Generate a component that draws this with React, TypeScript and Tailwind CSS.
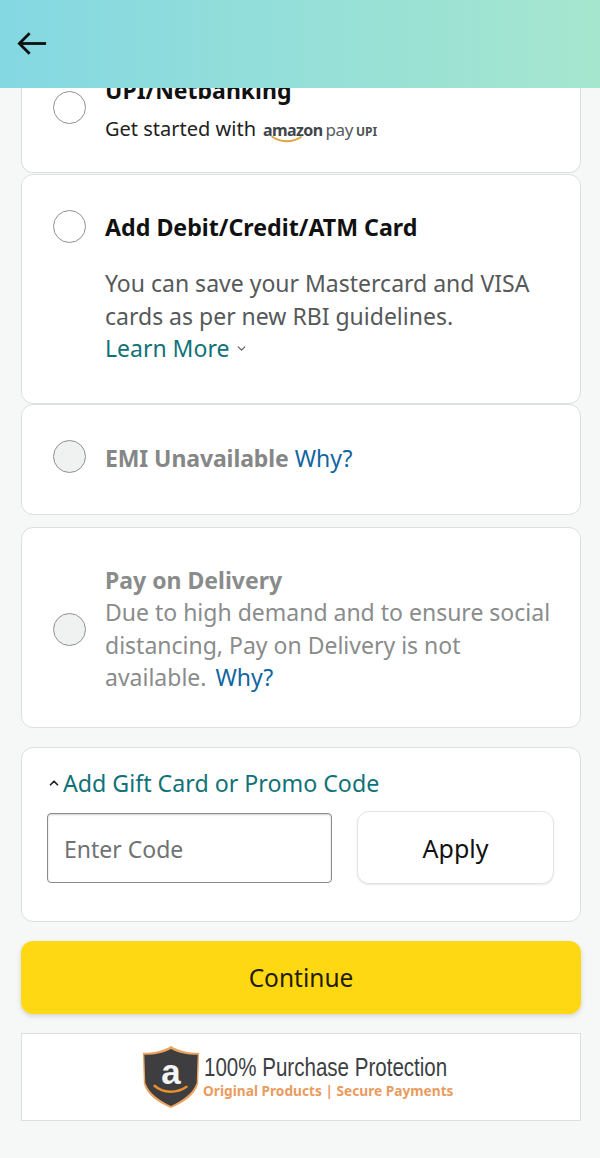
import { ChevronDown, ChevronUp } from "lucide-react";

const font = { fontFamily: '"Noto Sans", "Open Sans", sans-serif' };

function Radio({ disabled }: { disabled?: boolean }) {
  return (
    <span
      className={`block h-[33px] w-[33px] shrink-0 rounded-full border-[1.5px] border-[#8f9191] ${
        disabled ? "bg-[#f0f1f1]" : "bg-white"
      }`}
    />
  );
}

function AmazonPayLogo() {
  return (
    <span className="relative ml-[7px] inline-flex items-baseline leading-none">
      <span className="text-[16px] font-bold tracking-[-0.6px] text-[#3f4649]">amazon</span>
      <span className="ml-[3px] text-[17px] tracking-[-0.4px] text-[#555c5f]">pay</span>
      <span className="ml-[3px] text-[12px] font-bold text-[#4b5255]">UPI</span>
      <svg className="absolute left-[8px] top-[14px]" width="32" height="9" viewBox="0 0 32 9" fill="none">
        <path d="M1 1.5C9 7.5 21 8 30 2" stroke="#e2a33f" strokeWidth="1.8" strokeLinecap="round" />
      </svg>
    </span>
  );
}

function ShieldLogo() {
  return (
    <svg width="60" height="64" viewBox="0 0 60 66" className="shrink-0">
      <path d="M1 8 C12 8 22 6 30 1 C38 6 48 8 59 8 L58 40 C55 52 42 60 30 65 C18 60 5 52 2 40 Z" fill="#e9a35f" />
      <path d="M2.5 10 C14 10 23 8 30 4 C37 8 46 10 57.5 10 L56.5 39 C53 50 41 58 30 63 C19 58 7 50 3.5 39 Z" fill="#3e3e40" />
      <text x="30" y="40" textAnchor="middle" fontFamily="Liberation Sans, sans-serif" fontWeight="700" fontSize="36" fill="#f4f4f4">
        a
      </text>
      <path d="M13 42 C22 50 36 50 46 43" stroke="#e98f2d" strokeWidth="2.5" fill="none" strokeLinecap="round" />
    </svg>
  );
}

export default function App() {
  return (
    <div className="flex h-[1158px] w-[600px] flex-col overflow-hidden bg-[#f6f7f7] text-[#111]" style={font}>
      <header className="relative z-10 flex h-[88px] shrink-0 items-center bg-gradient-to-r from-[#84d8e2] to-[#a5e6ce] pl-[17px]">
        <svg width="30" height="25" viewBox="0 0 32 26" fill="none" stroke="#0f1111" strokeWidth="3" className="mb-[1px]">
          <path d="M31 13H3" />
          <path d="M13.5 2 2.5 13l11 11" />
        </svg>
      </header>

      <main className="flex flex-col pl-[21px] pr-[19px]">
        {/* first card is scrolled partly under the header */}
        <section className="flex h-[85px] rounded-b-[12px] border border-t-0 border-[#dcdfdf] bg-white pl-[31px] pr-4">
          <div className="mt-[3px]">
            <Radio />
          </div>
          <div className="ml-[19px] -mt-[13px]">
            <div className="text-[23px] leading-[30px] font-bold">UPI/Netbanking</div>
            <div className="mt-[10px] flex items-center text-[20px] leading-[28px] text-[#222]">
              Get started with
              <AmazonPayLogo />
            </div>
          </div>
        </section>

        <section className="mt-px flex h-[230px] rounded-[12px] border border-[#dcdfdf] bg-white pl-[31px] pr-4 pt-[35px]">
          <Radio />
          <div className="ml-[19px]">
            <div className="text-[23.2px] leading-[34px] font-bold">Add Debit/Credit/ATM Card</div>
            <p className="mt-[23px] text-[23px] leading-[32.5px] text-[#565959]">
              You can save your Mastercard and VISA
              <br />
              cards as per new RBI guidelines.
            </p>
            <div className="flex items-center text-[23px] leading-[32.5px] text-[#0f7278]">
              Learn More
              <ChevronDown size={13} strokeWidth={2} className="ml-[6px] text-[#565959]" />
            </div>
          </div>
        </section>

        <section className="flex h-[111px] items-center rounded-[12px] border border-[#dcdfdf] bg-white pl-[31px] pr-4 pb-[7px]">
          <Radio disabled />
          <div className="ml-[19px] mt-[3px] text-[23px] leading-[32px]">
            <span className="font-bold tracking-[-0.1px] text-[#858787]">EMI Unavailable</span>{" "}
            <span className="text-[#11659f]">Why?</span>
          </div>
        </section>

        <section className="mt-[12px] flex h-[201px] items-center rounded-[12px] border border-[#dcdfdf] bg-white pl-[31px] pr-4 pt-[2px]">
          <div className="mt-[2px]">
            <Radio disabled />
          </div>
          <div className="ml-[19px] text-[23px] leading-[32.5px] text-[#8a8c8c]">
            <div className="font-bold">Pay on Delivery</div>
            <div>Due to high demand and to ensure social</div>
            <div>distancing, Pay on Delivery is not</div>
            <div>
              available. <span className="ml-[3px] text-[#11659f]">Why?</span>
            </div>
          </div>
        </section>

        <section className="mt-[19px] h-[175px] rounded-[12px] border border-[#dcdfdf] bg-white pl-[25px] pr-[26px] pt-[19px]">
          <div className="flex items-center text-[23.2px] leading-[32px] text-[#0f7278]">
            <ChevronUp size={14} strokeWidth={3} className="mr-[2px] text-[#222]" />
            Add Gift Card or Promo Code
          </div>
          <div className="mt-[12px] flex items-center justify-between">
            <div className="flex h-[70px] w-[285px] items-center rounded-[4px] border border-[#888c8c] pl-[16px] pt-[3px] text-[23px] text-[#6f7373] shadow-[inset_0_1px_2px_rgba(15,17,17,0.2)]">
              Enter Code
            </div>
            <button className="h-[73px] w-[197px] rounded-[12px] border border-[#e3e5e5] bg-white pt-[2px] text-[25px] text-[#111] shadow-[0_1px_2px_rgba(15,17,17,0.1)]">
              Apply
            </button>
          </div>
        </section>

        <button className="mt-[19px] h-[73px] rounded-[12px] bg-[#ffd814] pt-[2px] text-[24.5px] text-[#221c00] shadow-[0_2px_5px_rgba(15,17,17,0.15)]">
          Continue
        </button>

        <section className="mt-[19px] flex h-[88px] items-center border border-[#dcdfdf] bg-white pl-[119px]">
          <ShieldLogo />
          <div className="ml-[3px] -mt-[3px]">
            <div
              className="origin-left scale-x-[0.79] whitespace-nowrap text-[26px] leading-[30px] text-[#3c4043]"
              style={{ fontFamily: '"Liberation Sans", sans-serif' }}
            >
              100% Purchase Protection
            </div>
            <div className="-ml-px text-[13.7px] leading-[17px] font-bold text-[#ea9b5e]">
              Original Products | Secure Payments
            </div>
          </div>
        </section>
      </main>
    </div>
  );
}
